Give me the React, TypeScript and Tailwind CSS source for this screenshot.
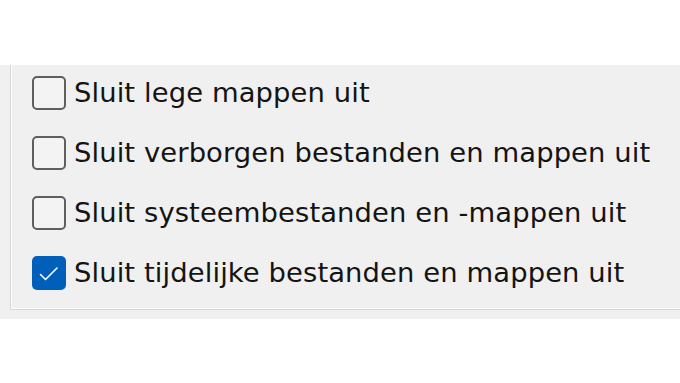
import React from 'react'

const options = [
  { label: 'Sluit lege mappen uit', checked: false },
  { label: 'Sluit verborgen bestanden en mappen uit', checked: false },
  { label: 'Sluit systeembestanden en -mappen uit', checked: false },
  { label: 'Sluit tijdelijke bestanden en mappen uit', checked: true },
]

function Checkbox({ checked }: { checked: boolean }) {
  if (checked) {
    return (
      <span className="flex h-[34px] w-[34px] shrink-0 items-center justify-center rounded-[5px] bg-[#005fb8]">
        <svg width="34" height="34" viewBox="0 0 34 34" fill="none">
          <path d="M8.5 18.5 L13.5 23.5 L25 12" stroke="#ffffff" strokeWidth="1.6" strokeLinecap="round" strokeLinejoin="round" />
        </svg>
      </span>
    )
  }
  return <span className="h-[34px] w-[34px] shrink-0 rounded-[5px] border-2 border-[#5f5f5f] bg-[#f3f3f3]" />
}

export default function App() {
  return (
    <div className="h-[383px] w-[680px] overflow-hidden bg-white pt-[65px]" style={{ fontFamily: '"DejaVu Sans", Verdana, sans-serif' }}>
      <div className="bg-[#f0f0f0] pb-[9px]">
        <div className="ml-[10px] border-b border-l border-[#d6d6d6] shadow-[inset_1px_-1px_0_#ffffff]">
          <div className="flex flex-col gap-[26px] pb-[19px] pl-[21px] pt-[11px]">
            {options.map((o) => (
              <label key={o.label} className="flex items-center gap-[8px]">
                <Checkbox checked={o.checked} />
                <span className="whitespace-nowrap text-[27.4px] leading-none tracking-[0.1px] text-[#141414]">{o.label}</span>
              </label>
            ))}
          </div>
        </div>
      </div>
    </div>
  )
}
